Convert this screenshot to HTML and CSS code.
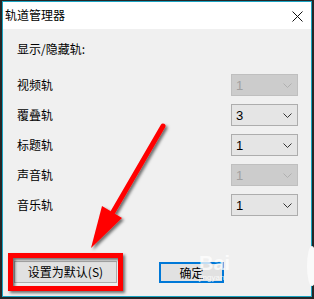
FILE: index.html
```html
<!DOCTYPE html>
<html lang="zh-CN">
<head>
  <meta charset="UTF-8">
  <title>轨道管理器</title>
  <link rel="stylesheet" href="styles.css">
</head>
<body>

  <div class="window">
    <div class="titlebar">
      <span class="title">轨道管理器</span>
      <svg class="close" width="11" height="11" viewBox="0 0 11 11">
        <path d="M0.5 0.5 L10.5 10.5 M10.5 0.5 L0.5 10.5" stroke="#111" stroke-width="1" fill="none"/>
      </svg>
    </div>

    <div class="content">
      <div class="heading">显示/隐藏轨:</div>

      <div class="rows">
        <div class="row">
          <span class="label">视频轨</span>
          <div class="combo disabled"><span>1</span><svg width="9" height="5" viewBox="0 0 9 5"><polyline points="0.5,0.5 4.5,4.5 8.5,0.5" fill="none" stroke="currentColor"/></svg></div>
        </div>
        <div class="row">
          <span class="label">覆叠轨</span>
          <div class="combo"><span>3</span><svg width="9" height="5" viewBox="0 0 9 5"><polyline points="0.5,0.5 4.5,4.5 8.5,0.5" fill="none" stroke="currentColor"/></svg></div>
        </div>
        <div class="row">
          <span class="label">标题轨</span>
          <div class="combo"><span>1</span><svg width="9" height="5" viewBox="0 0 9 5"><polyline points="0.5,0.5 4.5,4.5 8.5,0.5" fill="none" stroke="currentColor"/></svg></div>
        </div>
        <div class="row">
          <span class="label">声音轨</span>
          <div class="combo disabled"><span>1</span><svg width="9" height="5" viewBox="0 0 9 5"><polyline points="0.5,0.5 4.5,4.5 8.5,0.5" fill="none" stroke="currentColor"/></svg></div>
        </div>
        <div class="row">
          <span class="label">音乐轨</span>
          <div class="combo"><span>1</span><svg width="9" height="5" viewBox="0 0 9 5"><polyline points="0.5,0.5 4.5,4.5 8.5,0.5" fill="none" stroke="currentColor"/></svg></div>
        </div>
      </div>

      <div class="buttons">
        <button class="btn btn-default">设置为默认(S)</button>
        <button class="btn btn-ok">确定</button>
      </div>
    </div>
  </div>

  <!-- 标注：红色箭头和方框 -->
  <svg class="markup" width="314" height="299" viewBox="0 0 314 299">
    <defs>
      <filter id="shadow" x="-20%" y="-20%" width="140%" height="140%">
        <feDropShadow dx="2" dy="2" stdDeviation="1.5" flood-color="#000" flood-opacity="0.55"/>
      </filter>
    </defs>
    <ellipse cx="312" cy="266" rx="5" ry="20" fill="#fafafa"/>
    <g filter="url(#shadow)">
      <line x1="163" y1="126" x2="113" y2="212" stroke="#ff0000" stroke-width="5" stroke-linecap="round"/>
      <polygon points="102,206 122,218 91,248" fill="#ff0000"/>
      <rect x="10.5" y="255.5" width="110" height="33" fill="none" stroke="#ff0000" stroke-width="5"/>
    </g>
  </svg>

  <div class="watermark">Bai<small>jingyan</small></div>

</body>
</html>
```

FILE: styles.css
```css
body {
  margin: 0;
  padding: 1px 2px 2px 2px;
  width: 314px;
  height: 299px;
  box-sizing: border-box;
  background-color: #262626;
  font-family: "Noto Sans CJK SC", "Microsoft YaHei", sans-serif;
  font-size: 12px;
  color: #000;
  position: relative;
  overflow: hidden;
}

.window {
  width: 310px;
  height: 296px;
  box-sizing: border-box;
  border: 1px solid #1aa3c2;
  background-color: #f0f0f0;
  display: flex;
  flex-direction: column;
}

.titlebar {
  height: 27px;
  background-color: #fff;
  display: flex;
  align-items: center;
  justify-content: space-between;
  padding: 0 8px 0 2px;
}

.title {
  font-size: 12px;
  line-height: 16px;
  margin-top: -1px;
}

.close {
  display: block;
  margin-top: 1px;
}

.content {
  padding: 12px 13px 0 14px;
  display: flex;
  flex-direction: column;
}

.heading {
  line-height: 16px;
}

.rows {
  margin-top: 17px;
  display: flex;
  flex-direction: column;
  gap: 8px;
}

.row {
  display: flex;
  align-items: center;
  justify-content: space-between;
  height: 22px;
}

.label {
  line-height: 16px;
}

.combo {
  width: 67px;
  height: 22px;
  box-sizing: border-box;
  border: 1px solid #adadad;
  background-color: #e5e5e5;
  display: flex;
  align-items: center;
  justify-content: space-between;
  padding: 0 5px 0 4px;
  font-family: "Liberation Sans", Arial, sans-serif;
  font-size: 13px;
  color: #333;
}

.combo span {
  color: #000;
}

.combo svg {
  display: block;
  margin-top: 1px;
}

.combo.disabled {
  background-color: #cccccc;
  border-color: #bfbfbf;
  color: #b0b0b0;
}

.combo.disabled span {
  color: #a0a0a0;
}

.buttons {
  margin-top: 45px;
  margin-left: -3px;
  display: flex;
  gap: 42px;
}

.btn {
  height: 22px;
  box-sizing: border-box;
  background-color: #e1e1e1;
  border: 1px solid #adadad;
  font-family: "Noto Sans CJK SC", "Microsoft YaHei", sans-serif;
  font-size: 12px;
  color: #000;
  padding: 0;
  line-height: 16px;
}

.btn-default {
  width: 103px;
}

.btn-ok {
  width: 65px;
  border: 2px solid #0078d7;
  margin-top: 1px;
  height: 21px;
}

.markup {
  position: absolute;
  left: 0;
  top: 0;
  pointer-events: none;
}

.watermark {
  position: absolute;
  left: 199px;
  top: 253px;
  font-family: "Liberation Sans", Arial, sans-serif;
  font-weight: bold;
  font-size: 20px;
  line-height: 20px;
  color: rgba(255, 255, 255, 0.75);
  display: flex;
  flex-direction: column;
}

.watermark small {
  font-size: 8px;
  line-height: 9px;
  font-weight: normal;
  color: rgba(255, 255, 255, 0.8);
}
```
